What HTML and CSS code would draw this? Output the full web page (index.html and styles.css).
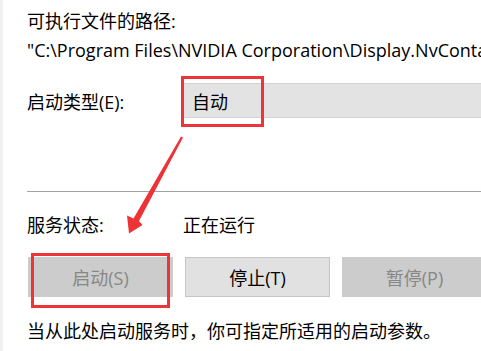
FILE: index.html
```html
<!DOCTYPE html>
<html lang="zh-CN">
<head>
<meta charset="utf-8">
<title>服务属性</title>
<link rel="stylesheet" href="styles.css">
</head>
<body>
<div class="page">
  <div class="line">可执行文件的路径:</div>
  <div class="line path">"C:\Program Files\NVIDIA Corporation\Display.NvContainer\NVDisplay.Container.exe"</div>
  <div class="row startup">
    <div class="label">启动类型(E):</div>
    <div class="combo">自动</div>
  </div>
  <div class="sep"></div>
  <div class="row status">
    <div class="label">服务状态:</div>
    <div class="value">正在运行</div>
  </div>
  <div class="buttons">
    <div class="btn disabled">启动(S)</div>
    <div class="btn">停止(T)</div>
    <div class="btn disabled">暂停(P)</div>
  </div>
  <div class="line hint">当从此处启动服务时，你可指定所适用的启动参数。</div>

  <div class="mark mark-combo"></div>
  <div class="mark mark-start"></div>
  <svg class="arrow" width="481" height="351" viewBox="0 0 481 351">
    <polygon points="181,136.5 183,137.5 139,221 142.5,225 129,233.5 127,215.5 133.5,218.5" fill="#ee3338"/>
  </svg>
</div>
</body>
</html>
```

FILE: styles.css
```css
html, body {
  margin: 0;
  padding: 0;
  background: #ffffff;
}

body {
  width: 481px;
  height: 351px;
  overflow: hidden;
  font-family: "Open Sans", "Noto Sans CJK SC", sans-serif;
  font-size: 18px;
  color: #000;
}

.page {
  position: relative;
  height: 351px;
  overflow: hidden;
  border-left: 3px solid #f0f0f0;
  padding-left: 24px;
  padding-top: 7px;
  box-sizing: border-box;
}

.line {
  line-height: 29px;
  white-space: nowrap;
}

.path {
  overflow: hidden;
}

.row {
  display: flex;
  align-items: center;
}

.label {
  width: 156px;
  flex: none;
}

.startup {
  margin-top: 18px;
  height: 35px;
}

.combo {
  flex: 1;
  height: 35px;
  box-sizing: border-box;
  background: #e3e3e3;
  border: 1px solid #d2d2d2;
  border-right: none;
  padding-left: 8px;
  display: flex;
  align-items: center;
}

.sep {
  margin-top: 73px;
  height: 1px;
  background: #a3a3a3;
}

.status {
  margin-top: 19px;
  height: 26px;
}

.buttons {
  margin-top: 20px;
  display: flex;
  gap: 12px;
  margin-left: 1px;
}

.btn {
  flex: none;
  width: 145px;
  height: 40px;
  box-sizing: border-box;
  background: #e1e1e1;
  border: 1px solid #c4c4c4;
  display: flex;
  align-items: center;
  justify-content: center;
}

.btn.disabled {
  background: #cccccc;
  border-color: #cccccc;
  color: #878787;
}

.hint {
  margin-top: 20px;
}

.mark {
  position: absolute;
  border: 3px solid #ec3439;
  box-sizing: border-box;
}

.mark-combo {
  left: 178px;
  top: 76px;
  width: 83px;
  height: 51px;
}

.mark-start {
  left: 28px;
  top: 253px;
  width: 139px;
  height: 55px;
}

.arrow {
  position: absolute;
  left: -3px;
  top: 0;
  pointer-events: none;
}
```
